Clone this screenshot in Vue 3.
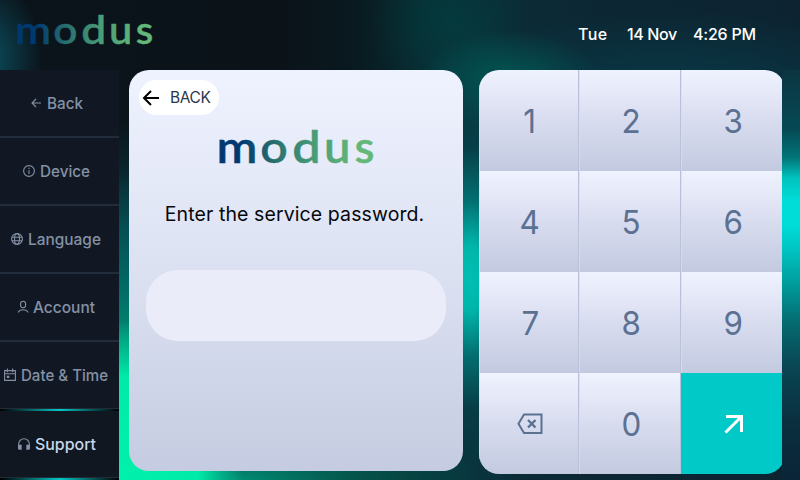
<script setup>
const items = [
  { id: 'back', label: 'Back', width: 36, inset: 29, gap: 4 },
  { id: 'device', label: 'Device', width: 50, inset: 22, gap: 4 },
  { id: 'language', label: 'Language', width: 73, inset: 10, gap: 4 },
  { id: 'account', label: 'Account', width: 62, inset: 17, gap: 2 },
  { id: 'date', label: 'Date & Time', width: 87, inset: 3, gap: 4 },
  { id: 'support', label: 'Support', width: 61, inset: 17, gap: 4 },
]
const keys = ['1', '2', '3', '4', '5', '6', '7', '8', '9', 'del', '0', 'go']
const logo = [
  { c: 'm', x: -2.4, w: 41 },
  { c: 'o', x: 41.3, w: 27.5 },
  { c: 'd', x: 73.3, w: 28.5 },
  { c: 'u', x: 105, w: 26.500 },
  { c: 's', x: 135.500, w: 20 },
]
</script>

<template>
  <div class="screen">
    <header class="top">
      <svg class="brand" viewBox="0 0 155 34" role="img" aria-label="modus">
        <defs>
          <linearGradient id="brand-a" gradientUnits="userSpaceOnUse" x1="0" y1="0" x2="155" y2="0">
            <stop offset=".14" stop-color="#003870" /><stop offset=".36" stop-color="#28706f" />
            <stop offset=".62" stop-color="#4a9d77" /><stop offset=".9" stop-color="#63b879" />
          </linearGradient>
        </defs>
        <text v-for="l in logo" :key="l.c" class="logo-letter" :x="l.x" y="33" :textLength="l.w" lengthAdjust="spacingAndGlyphs" fill="url(#brand-a)" stroke="url(#brand-a)" stroke-width=".4">{{ l.c }}</text>
      </svg>
      <div class="clock">
        <span class="day">Tue</span><span class="date">14 Nov</span><span class="time">4:26 PM</span>
      </div>
    </header>

    <main class="body">
      <nav class="side">
        <div v-for="i in items" :key="i.id" class="item" :class="{ active: i.id === 'support', lit: i.id === 'date' || i.id === 'support' }">
          <div class="item-row" :style="{ paddingLeft: i.inset + 'px', gap: i.gap + 'px' }">
            <svg class="ico" viewBox="0 0 14 14" fill="none" stroke="currentColor" stroke-width="1.1">
              <path v-if="i.id === 'back'" d="M12 7H3M7 3L3 7l4 4" />
              <g v-else-if="i.id === 'device'"><circle cx="7" cy="7" r="5.4" /><path d="M7 6.2V10M7 3.8v1.2" /></g>
              <g v-else-if="i.id === 'language'"><circle cx="7" cy="7" r="5.4" /><ellipse cx="7" cy="7" rx="2.5" ry="5.4" /><path d="M1.8 5.2h10.4M1.8 8.8h10.4" /></g>
              <g v-else-if="i.id === 'account'"><rect x="3.6" y="1.2" width="5" height="6.5" rx="2.5" /><path d="M1.4 12.6v-.8C2.4 10.2 4 9.7 6.1 9.7s3.7.5 4.7 2.1v.8" /></g>
              <g v-else-if="i.id === 'date'"><path d="M1.6 2.6h10.8v9.8H1.6zM1.6 5.7h10.8M4.3.6v3.7M9.7.6v3.7" /><path d="M3.8 7.7h2.5v2.3H3.8z" fill="currentColor" stroke="none" /></g>
              <g v-else><path d="M1.7 12V7a5.3 5.3 0 0 1 10.6 0v5" /><path d="M1 7.8h3.7v5H2.5A1.5 1.5 0 0 1 1 11.3zM9.3 7.8H13v3.5a1.5 1.5 0 0 1-1.5 1.5H9.3z" fill="currentColor" stroke="none" /></g>
            </svg>
            <svg class="label" height="22" :width="i.width + 2"><text x="0" y="17" :textLength="i.width" lengthAdjust="spacingAndGlyphs">{{ i.label }}</text></svg>
          </div>
        </div>
      </nav>

      <section class="panel">
        <button class="back">
          <svg width="18" height="18" viewBox="0 0 18 18" fill="none" stroke="#000" stroke-width="2"><path d="M17 9H2M9 2L2 9l7 7" /></svg>
          <span>BACK</span>
        </button>
        <svg class="panel-logo" viewBox="0 0 155 34" role="img" aria-label="modus">
          <text v-for="l in logo" :key="l.c" class="logo-letter" :x="l.x" y="33" :textLength="l.w" lengthAdjust="spacingAndGlyphs" fill="url(#brand-a)" stroke="url(#brand-a)" stroke-width=".4">{{ l.c }}</text>
        </svg>
        <p class="prompt">Enter the service password.</p>
        <div class="field"></div>
      </section>

      <section class="pad-clip">
        <div class="pad">
          <button v-for="k in keys" :key="k" class="key" :class="{ go: k === 'go' }">
            <svg v-if="k === 'del'" width="26" height="22" viewBox="0 0 26 22" fill="none" stroke="#5b7192" stroke-width="2"><path d="M7 1.5h17.5v18.5H7L1.5 10.8z" /><path d="M11 7l7.500 7.500M18.500 7L11 14.500" stroke-width="2.400" /></svg>
            <svg v-else-if="k === 'go'" width="20" height="20" viewBox="0 0 20 20" fill="none" stroke="#fff" stroke-width="3"><path d="M2 2.500H17.500V18M17.500 2.500L1.500 18.500" /></svg>
            <span v-else class="digit">{{ k }}</span>
          </button>
        </div>
      </section>
    </main>
  </div>
</template>

<style>
body { margin: 0; overflow: hidden; background: #0b141b; }
</style>
<style scoped>
* { box-sizing: border-box; }
.screen {
  width: 800px; height: 480px; overflow: hidden;
  font-family: Inter, "Open Sans", sans-serif;
  background:
    linear-gradient(#0b3541, #054a55 60px, #02767a 88px, #00c2bd 108px, #00dcd8 130px, #00dcd8 155px, #00c4c2 180px, #009a9b 215px, #05686e 255px, #094452 300px, #0a3040 350px, #0b2438 410px) 782px 70px / 18px 410px no-repeat,
    radial-gradient(ellipse 128px 160px at 115px 480px, #00f2ac 0%, #00eaa8 65%, rgba(0, 200, 150, .6) 85%, transparent 100%),
    radial-gradient(ellipse 60px 130px at 470px 278px, #00bfb3 0%, #00b5aa 25%, rgba(0, 150, 145, .5) 60%, transparent 100%),
    radial-gradient(ellipse 130px 180px at 124px 350px, rgba(0, 150, 125, .95) 0%, rgba(0, 110, 105, .6) 50%, transparent 100%),
    radial-gradient(ellipse 240px 70px at 240px 480px, rgba(0, 145, 120, .95), transparent),
    radial-gradient(ellipse 56px 80px at -14px 58px, #0b5060, transparent),
    radial-gradient(ellipse 70px 140px at 124px 260px, #064650, transparent),
    radial-gradient(ellipse 90px 50px at 510px 80px, rgba(0, 92, 86, .85), transparent),
    radial-gradient(ellipse 80px 80px at 450px 20px, rgba(0, 68, 68, .6), transparent),
    radial-gradient(ellipse 260px 80px at 680px 90px, rgba(7, 62, 76, .8), transparent),
    radial-gradient(ellipse 80px 260px at 472px 270px, #045058, transparent),
    linear-gradient(90deg, #0b141b 0, #0b1319 280px, #09191f 350px, #082a31 420px, #0b2c37 500px, #0c2733 600px, #0d2331 800px);
}
.top { height: 70px; display: flex; justify-content: space-between; padding: 14px 44px 0 17px; }
.brand { width: 136px; height: 31px; overflow: visible; }
.logo-letter { font: 600 44px Lato, sans-serif; }
.clock { display: flex; height: 40px; align-items: center; color: #fff; font-size: 16px; font-weight: 500; white-space: nowrap; }
.day { width: 49px; letter-spacing: .4px; }
.date { width: 66px; letter-spacing: -.35px; }
.time { width: 63px; letter-spacing: -.2px; }
.body { display: flex; height: 410px; }
.side { width: 119px; flex: none; }
.item { height: 68px; background: #121823; border-bottom: 2px solid #222c3a; color: #8491a5; overflow: hidden; }
.item-row { height: 66px; display: flex; align-items: center; }
.item.lit { height: 69px; border-bottom: 0; }
.item.lit::after { content: ""; display: block; height: 2px; background: linear-gradient(90deg, #000, #00c9c6 50%, #000); }
.item.lit .item-row { height: 67px; border-bottom: 1px solid #222c3a; }
.item.active { background: #101720; }
.ico { width: 14px; height: 14px; flex: none; }
.label { flex: none; fill: currentColor; font-size: 16px; font-weight: 500; overflow: visible; }
.active .label { fill: #c6d7e9; }
.panel {
  width: 334px; height: 401px; margin-left: 10px; border-radius: 20px; flex: none;
  background: linear-gradient(#eff3ff, #dce1f2 50%, #c5cce1);
  display: flex; flex-direction: column; align-items: center; padding-top: 10px;
}
.back {
  align-self: flex-start; margin-left: 10px; width: 80px; height: 35px; border: 0; border-radius: 18px; background: #fff;
  padding: 0 0 0 3px; display: flex; align-items: center; gap: 10px; color: #29374c;
  font: 400 15.5px Inter, sans-serif; letter-spacing: -.4px;
}
.panel-logo { width: 155px; height: 34px; margin-top: 15px; overflow: visible; }
.prompt { margin: 38px 3px 0 0; font-size: 19.5px; line-height: 24px; white-space: nowrap; letter-spacing: .1px; color: #07080c; }
.field { width: 300px; height: 71px; margin-top: 44px; border-radius: 32px; background: #eaedf9; }
.pad-clip { width: 303px; height: 404px; margin-left: 16px; overflow: hidden; flex: none; }
.pad { width: 306px; height: 404px; border-radius: 20px; overflow: hidden; display: grid; grid-template-columns: 100px 102px 104px; grid-template-rows: repeat(4, 101px); }
.key {
  border: 0; border-right: 1px solid #b9c0d9; padding: 0 0 0 3px; margin: 0; display: flex; align-items: center; justify-content: center;
  background: linear-gradient(#eff3ff, #d8dcef 50%, #c3cae0); box-shadow: inset 1px 0 rgba(216, 221, 240, .8);
  color: #5b7192; font: 400 33px Inter, sans-serif;
}
.key:nth-child(3n) { padding-left: 1px; }
.digit { transform: scaleX(.95); }
.key.go { background: #00c9c7; box-shadow: none; padding-left: 3px; }
</style>
